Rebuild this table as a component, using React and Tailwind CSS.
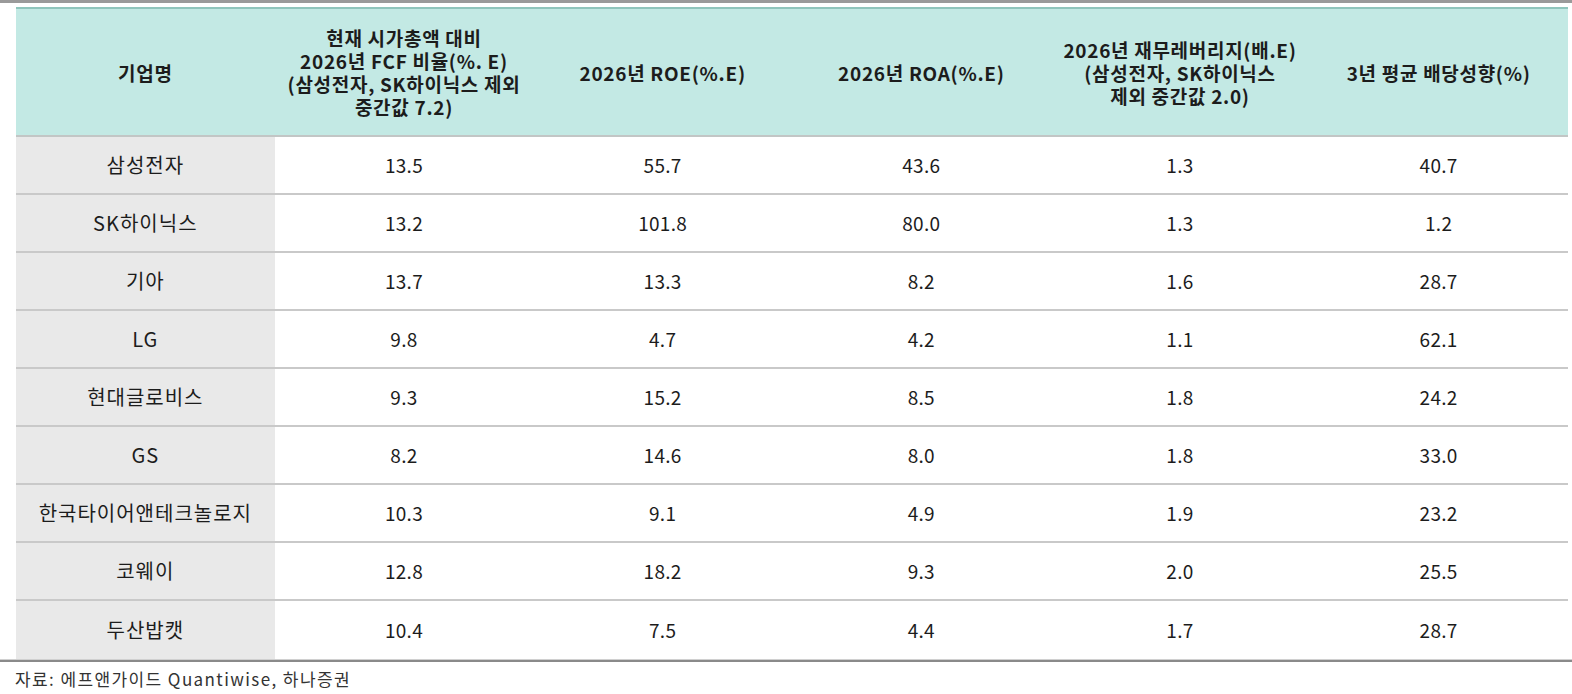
const headers = [
  ['기업명'],
  ['현재 시가총액 대비', '2026년 FCF 비율(%. E)', '(삼성전자, SK하이닉스 제외', '중간값 7.2)'],
  ['2026년 ROE(%.E)'],
  ['2026년 ROA(%.E)'],
  ['2026년 재무레버리지(배.E)', '(삼성전자, SK하이닉스', '제외 중간값 2.0)'],
  ['3년 평균 배당성향(%)'],
];

const rows = [
  ['삼성전자', '13.5', '55.7', '43.6', '1.3', '40.7'],
  ['SK하이닉스', '13.2', '101.8', '80.0', '1.3', '1.2'],
  ['기아', '13.7', '13.3', '8.2', '1.6', '28.7'],
  ['LG', '9.8', '4.7', '4.2', '1.1', '62.1'],
  ['현대글로비스', '9.3', '15.2', '8.5', '1.8', '24.2'],
  ['GS', '8.2', '14.6', '8.0', '1.8', '33.0'],
  ['한국타이어앤테크놀로지', '10.3', '9.1', '4.9', '1.9', '23.2'],
  ['코웨이', '12.8', '18.2', '9.3', '2.0', '25.5'],
  ['두산밥캣', '10.4', '7.5', '4.4', '1.7', '28.7'],
];

export default function App() {
  return (
    <div
      className="w-[1572px] h-[694px] bg-white text-[#1c1c1c] overflow-hidden"
      style={{ fontFamily: '"Noto Sans CJK KR", "Noto Sans", sans-serif' }}
    >
      <div className="h-[3px] bg-[#9a9a9a]" />
      <div className="pl-[16px] pr-[4px] pt-[4px]">
        {/* Header */}
        <div className="grid grid-cols-6 h-[130px] bg-[#c3e9e4] border-t-2 border-[#8fc5bc] border-b-2 border-b-[#c2c6c5]">
          {headers.map((lines, i) => (
            <div key={i} className="flex flex-col items-center justify-center text-center font-bold text-[19px] leading-[23px] tracking-[0.7px]">
              {lines.map((l, j) => (
                <div key={j} className="whitespace-nowrap">{l}</div>
              ))}
            </div>
          ))}
        </div>

        {/* Body */}
        {rows.map((r, i) => (
          <div
            key={i}
            className={`grid grid-cols-6 h-[58px] ${i < rows.length - 1 ? 'border-b-2 border-[#c9c9c9]' : ''}`}
          >
            {r.map((c, j) => (
              <div
                key={j}
                className={`flex items-center justify-center text-[19px] ${j === 0 ? 'bg-[#e9e9e9] text-[20px] tracking-[1px]' : 'tracking-[0.3px]'}`}
              >
                {c}
              </div>
            ))}
          </div>
        ))}
      </div>
      <div className="h-px bg-[#d0d0d0]" />
      <div className="h-[2px] bg-[#8a8a8a]" />
      <div className="pl-[15px] pt-[6px] text-[17px] leading-[21px] tracking-[1.4px] text-[#333]">
        자료: 에프앤가이드 Quantiwise, 하나증권
      </div>
    </div>
  );
}
